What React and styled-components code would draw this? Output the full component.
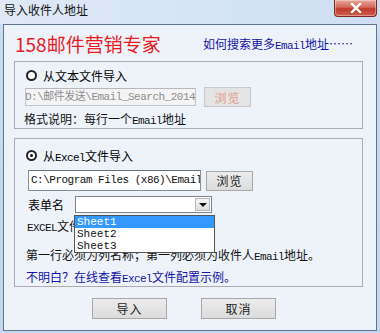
import React from 'react';
import styled, { createGlobalStyle } from 'styled-components';

const GlobalStyle = createGlobalStyle`
  html, body { margin: 0; padding: 0; background: #c9dcf2; }
  body { font-family: "Noto Sans CJK SC", "Noto Sans", sans-serif; font-size: 12px; color: #000; }
  * { box-sizing: border-box; }
`;

const Window = styled.div`
  width: 380px;
  height: 333px;
  display: flex;
  flex-direction: column;
  background: linear-gradient(#d9e6f6, #c6daf1 40px, #c3d8f0);
  overflow: hidden;
`;

const TitleBar = styled.div`
  height: 24px;
  display: flex;
  justify-content: space-between;
  align-items: flex-start;
  padding: 0 5px 0 4px;
  background: linear-gradient(90deg, #dfe9f6 0%, #d4e3f5 60%, #cfdff3 100%);
`;

const Title = styled.span`
  line-height: 20px;
  font-size: 12px;
  color: #111;
`;

const CloseButton = styled.div`
  width: 43px;
  height: 17px;
  margin-right: -2px;
  border: 1px solid #7a2a22;
  border-top: none;
  border-radius: 0 0 4px 4px;
  background: linear-gradient(#e8a89a 0%, #d2685a 45%, #c03a2a 55%, #d0604c 100%);
  box-shadow: inset 0 0 0 1px rgba(255, 255, 255, 0.35);
  display: flex;
  align-items: center;
  justify-content: center;
`;

const Client = styled.div`
  flex: 1;
  margin: 0 3px 2px 3px;
  border: 1px solid #5e7491;
  background: #eef3fa;
  display: flex;
  flex-direction: column;
`;

const Header = styled.div`
  height: 36px;
  display: flex;
  align-items: center;
  justify-content: space-between;
  padding: 0 23px 0 11px;
`;

const Brand = styled.span`
  font-size: 19px;
  color: #ea1a1f;
  line-height: 22px;
  margin-top: 2px;
`;

const HelpLink = styled.span`
  color: #1414a8;
  font-size: 12px;
  margin-top: 1px;
`;

const Group = styled.div`
  position: relative;
  margin: 0 13px 0 10px;
  border: 1px solid #a9adb3;
  height: ${p => p.$h}px;
  margin-top: ${p => p.$mt || 0}px;
  padding: ${p => p.$pad};
  display: flex;
  flex-direction: column;
`;

const RadioRow = styled.div`
  display: flex;
  align-items: center;
  gap: 6px;
  height: 14px;
  margin-left: 11px;
`;

const Radio = styled.span`
  width: 11px;
  height: 11px;
  border-radius: 50%;
  border: 2px solid #222;
  background: #fff;
  display: flex;
  align-items: center;
  justify-content: center;
  &::after {
    content: '';
    width: 3px;
    height: 3px;
    border-radius: 50%;
    background: ${p => (p.$checked ? '#111' : 'transparent')};
  }
`;

const FieldRow = styled.div`
  display: flex;
  align-items: center;
  gap: ${p => p.$gap}px;
  margin-left: ${p => p.$ml}px;
  margin-top: ${p => p.$mt}px;
`;

const PathInput = styled.div`
  width: ${p => p.$w}px;
  height: ${p => p.$h}px;
  border: 1px solid ${p => (p.$disabled ? '#c2c6cc' : '#8a9099')};
  border-top-color: ${p => (p.$disabled ? '#b5b9bf' : '#6a7078')};
  background: ${p => (p.$disabled ? '#f4f4f4' : '#fff')};
  color: ${p => (p.$disabled ? '#8d8d8d' : '#111')};
  font-family: "Liberation Mono", "Noto Sans CJK SC", monospace;
  font-size: 11px;
  letter-spacing: -0.5px;
  line-height: ${p => p.$h - 2}px;
  white-space: nowrap;
  overflow: hidden;
  padding-left: 2px;
  text-indent: ${p => p.$indent || 0}px;
`;

const Button = styled.div`
  width: ${p => p.$w}px;
  height: ${p => p.$h}px;
  border: 1px solid ${p => (p.$disabled ? '#c8c8c8' : '#a8a8a8')};
  background: ${p => (p.$disabled ? '#e4e4e4' : 'linear-gradient(#ececec, #dcdcdc)')};
  color: ${p => (p.$disabled ? '#e39a86' : '#222')};
  display: flex;
  align-items: center;
  justify-content: center;
  font-size: 12px;
  letter-spacing: 1px;
`;

const Line = styled.div`
  margin-left: ${p => p.$ml}px;
  margin-top: ${p => p.$mt}px;
  line-height: 16px;
  height: 16px;
  white-space: nowrap;
  color: ${p => p.$color || '#111'};
`;

const Latin = styled.span`
  font-family: "Liberation Mono", monospace;
  font-size: 11px;
  letter-spacing: -0.6px;
`;

const Select = styled.div`
  width: 137px;
  height: 17px;
  border: 1px solid #7f858d;
  background: #fff;
  display: flex;
  justify-content: flex-end;
  padding: 1px;
`;

const SelectArrow = styled.div`
  width: 15px;
  height: 13px;
  background: linear-gradient(#f4f4f4, #dedede);
  border: 1px solid #b8b8b8;
  display: flex;
  align-items: center;
  justify-content: center;
  &::after {
    content: '';
    border-left: 4px solid transparent;
    border-right: 4px solid transparent;
    border-top: 4px solid #111;
  }
`;

const DropList = styled.div`
  position: absolute;
  left: 59px;
  top: 76px;
  width: 141px;
  border: 1px solid #555;
  background: #fff;
  display: flex;
  flex-direction: column;
  z-index: 2;
`;

const DropItem = styled.div`
  height: 12px;
  line-height: 12px;
  padding-left: 2px;
  font-family: "Liberation Mono", monospace;
  font-size: 11px;
  background: ${p => (p.$active ? '#3399ff' : 'transparent')};
  color: ${p => (p.$active ? '#fff' : '#111')};
`;

const ButtonRow = styled.div`
  display: flex;
  justify-content: center;
  gap: 34px;
  margin-top: 11px;
  margin-right: 12px;
`;

export default function App() {
  return (
    <>
      <GlobalStyle />
      <Window>
        <TitleBar>
          <Title>导入收件人地址</Title>
          <CloseButton>
            <svg width="12" height="10" viewBox="0 0 12 10">
              <path d="M2 1 L10 9 M10 1 L2 9" stroke="#fff" strokeWidth="2.4" strokeLinecap="square" />
            </svg>
          </CloseButton>
        </TitleBar>
        <Client>
          <Header>
            <Brand>158邮件营销专家</Brand>
            <HelpLink>如何搜索更多<Latin>Email</Latin>地址……</HelpLink>
          </Header>

          <Group $h={68} $pad="6px 0 0 0">
            <RadioRow>
              <Radio />
              <span>从文本文件导入</span>
            </RadioRow>
            <FieldRow $gap={8} $ml={10} $mt={5}>
              <PathInput $w={171} $h={18} $disabled $indent={-3}>D:\邮件发送\Email_Search_2014\</PathInput>
              <Button $w={47} $h={20} $disabled>浏览</Button>
            </FieldRow>
            <Line $ml={9} $mt={4}>格式说明：每行一个<Latin>Email</Latin>地址</Line>
          </Group>

          <Group $h={149} $mt={9} $pad="9px 0 0 0">
            <RadioRow>
              <Radio $checked />
              <span>从<Latin>Excel</Latin>文件导入</span>
            </RadioRow>
            <FieldRow $gap={5} $ml={13} $mt={8}>
              <PathInput $w={173} $h={21}>C:\Program Files (x86)\Email6\</PathInput>
              <Button $w={47} $h={20}>浏览</Button>
            </FieldRow>
            <FieldRow $gap={11} $ml={13} $mt={5}>
              <span>表单名</span>
              <Select>
                <SelectArrow />
              </Select>
            </FieldRow>
            <Line $ml={12} $mt={5}><Latin>EXCEL</Latin>文件格式说明：</Line>
            <Line $ml={11} $mt={13}>第一行必须为列名称；第一列必须为收件人<Latin>Email</Latin>地址。</Line>
            <Line $ml={11} $mt={6} $color="#1414a8">不明白？在线查看<Latin>Excel</Latin>文件配置示例。</Line>
            <DropList>
              <DropItem $active>Sheet1</DropItem>
              <DropItem>Sheet2</DropItem>
              <DropItem>Sheet3</DropItem>
            </DropList>
          </Group>

          <ButtonRow>
            <Button $w={75} $h={21}>导入</Button>
            <Button $w={75} $h={21}>取消</Button>
          </ButtonRow>
        </Client>
      </Window>
    </>
  );
}
